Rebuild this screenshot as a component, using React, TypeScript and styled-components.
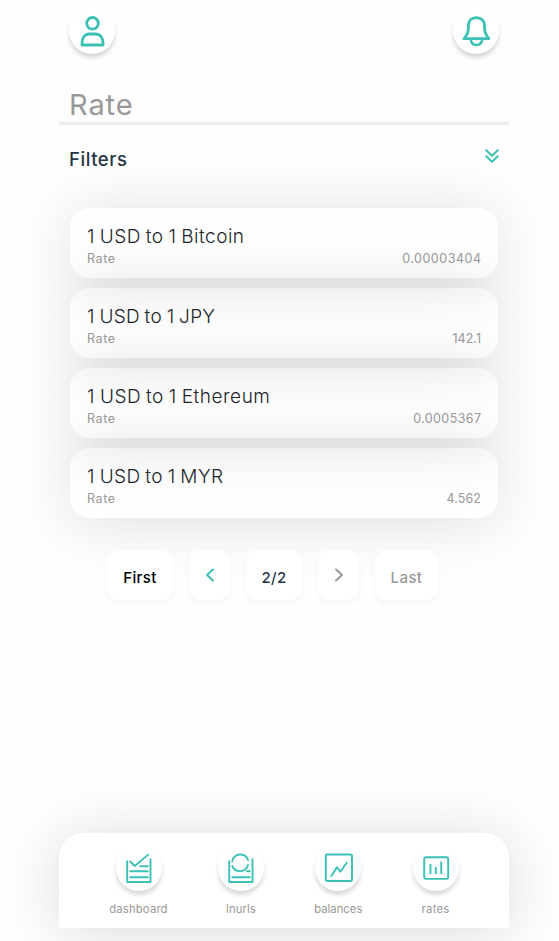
import React from "react";
import styled, { createGlobalStyle } from "styled-components";

const teal = "#3ac1b3";

const GlobalStyle = createGlobalStyle`
  * { box-sizing: border-box; }
  body {
    margin: 0;
    background: #fefefe;
    color: #212529;
    font-family: Inter, "Liberation Sans", sans-serif;
    overflow: hidden;
  }
  button { font: inherit; border: 0; padding: 0; }
`;

const Page = styled.div`
  width: 450px;
  height: 941px;
  margin-left: 59px;
  display: flex;
  flex-direction: column;
`;

const TopBar = styled.header`
  display: flex;
  justify-content: space-between;
  padding: 8px 10px 0;
`;

const RoundButton = styled.span`
  width: 46px;
  height: 46px;
  border-radius: 50%;
  background: #fff;
  box-shadow: 0 4px 4px rgba(0, 0, 0, 0.15);
  display: flex;
  align-items: center;
  justify-content: center;
`;

const Icon = styled.svg`
  display: block;
  fill: none;
  stroke: currentColor;
  color: ${teal};
  stroke-linecap: round;
  stroke-linejoin: round;
`;

const Title = styled.h1`
  height: 71px;
  margin: 0;
  padding: 33px 10px 0;
  border-bottom: 3px solid #ededed;
  border-radius: 2px;
  font-size: 29px;
  line-height: 36px;
  font-weight: 400;
  letter-spacing: 0.9px;
  color: #999;
`;

const FilterBar = styled.div`
  height: 83px;
  padding: 22px 10px 0;
  display: flex;
  justify-content: space-between;
  align-items: flex-start;
`;

const FilterTitle = styled.h2`
  margin: 0;
  font-size: 18.5px;
  line-height: 24px;
  font-weight: 500;
  letter-spacing: 0.55px;
  color: #253746;
`;

const RateList = styled.main`
  padding: 0 11px;
  display: flex;
  flex-direction: column;
  gap: 10px;
`;

const RateCard = styled.section`
  height: 70px;
  padding: 16px 17px 0;
  border-radius: 20px;
  box-shadow: 0 4px 60px rgba(0, 0, 0, 0.13);
`;

const Pair = styled.div<{ $spacing: number }>`
  font-size: 19px;
  line-height: 25px;
  font-weight: 330;
  white-space: nowrap;
  word-spacing: -1px;
  letter-spacing: ${(p) => p.$spacing}px;
`;

const RateLine = styled.div`
  display: flex;
  justify-content: space-between;
  font-size: 12.5px;
  line-height: 19px;
  font-weight: 400;
  letter-spacing: 0.6px;
  color: #999;
`;

const Amount = styled.span<{ $spacing: number }>`
  letter-spacing: ${(p) => p.$spacing}px;
  margin-right: ${(p) => -p.$spacing}px;
`;

const Pager = styled.nav`
  display: flex;
  gap: 16px;
  padding: 32px 0 0 48px;
`;

const PageButton = styled.button<{ $width: number; $color?: string }>`
  width: ${(p) => p.$width}px;
  height: 50px;
  padding-top: 4px;
  display: flex;
  align-items: center;
  justify-content: center;
  border-radius: 12px;
  background: #fff;
  box-shadow: 0 3px 6px rgba(0, 0, 0, 0.04);
  color: ${(p) => p.$color ?? "#253746"};
  font-size: 15px;
  font-weight: 500;
  letter-spacing: 0.4px;
`;

const Arrow = styled(Icon)`
  color: inherit;
  margin-top: -4px;
`;

const BottomNav = styled.footer`
  height: 95px;
  margin: auto 0 13px;
  padding: 12px 0 0 50px;
  flex: none;
  display: flex;
  gap: 50px;
  background: #fff;
  border-radius: 25px 25px 0 0;
  box-shadow: 0 4px 60px rgba(0, 0, 0, 0.14);
`;

const NavItem = styled.div<{ $width: number }>`
  width: ${(p) => p.$width}px;
  display: flex;
  flex-direction: column;
  align-items: center;
`;

const NavLabel = styled.span<{ $spacing: number }>`
  margin-top: 11px;
  font-size: 11.3px;
  line-height: 14px;
  font-weight: 400;
  letter-spacing: ${(p) => p.$spacing}px;
  color: #999;
`;

const UserIcon = () => (
  <Icon width="46" height="46" viewBox="0 0 46 46" strokeWidth="2.8">
    <circle cx="23.5" cy="15.3" r="5.8" />
    <path d="M13 37V35.5C13 29.5 16 26 20.5 26H26.5C31 26 34 29.5 34 35.5V37Z" />
  </Icon>
);

const BellIcon = () => (
  <Icon width="46" height="46" viewBox="0 0 46 46" strokeWidth="2.8">
    <path d="M23.3 9.6C18.3 9.6 15.5 13 15.5 17.3C15.5 24 14.9 26 11 30.6H36C32 26 31.5 24 31.5 17.3C31.5 13 28.3 9.6 23.3 9.6Z" />
    <path strokeWidth="2.4" d="M17.7 31.5C18.7 38.8 28.3 38.8 29.2 31.5" />
  </Icon>
);

const DashboardIcon = () => (
  <Icon width="46" height="46" viewBox="0 0 46 46" strokeWidth="1.9">
    <path d="M11.2 16.3V37H34.5V14.3M14.2 16.5L18.8 21L32.2 9.6M24.2 21.3H31.8M14.3 26.3H31.8M14.3 32.3H31.8" />
  </Icon>
);

const LnurlIcon = () => (
  <Icon width="46" height="46" viewBox="0 0 46 46" strokeWidth="1.9">
    <path d="M11.2 16.3V37H34.5V14.3M14.3 32.3H31.8M29 26.3H31.8M14.2 16.4C16 7.8 27.4 7.2 30 15M14.3 20.9C17 28.2 27.7 27.8 30 20" />
  </Icon>
);

const BalanceIcon = () => (
  <Icon width="46" height="46" viewBox="0 0 46 46" strokeWidth="1.9">
    <rect x="10.8" y="9.5" width="26.2" height="26.5" rx="1.3" />
    <path d="M16.3 31L22 22.2L25.3 26.8L31.8 17.5" />
  </Icon>
);

const RatesIcon = () => (
  <Icon width="46" height="46" viewBox="0 0 46 46" strokeWidth="1.9">
    <rect x="11.2" y="12.3" width="24" height="21.6" rx="1.8" />
    <path d="M17.5 19.8V28.2M22.8 22.8V28.2M28.2 17.3V28.2" />
  </Icon>
);

const rates = [
  { pair: "1 USD to 1 Bitcoin", spacing: 0.5, amount: "0.00003404", amountSpacing: 0.52 },
  { pair: "1 USD to 1 JPY", spacing: 0.3, amount: "142.1", amountSpacing: 0.05 },
  { pair: "1 USD to 1 Ethereum", spacing: 0.54, amount: "0.0005367", amountSpacing: 0.4 },
  { pair: "1 USD to 1 MYR", spacing: 0.42, amount: "4.562", amountSpacing: 0.1 },
];

const navItems = [
  { label: "dashboard", icon: <DashboardIcon />, width: 59, spacing: 0.15 },
  { label: "lnurls", icon: <LnurlIcon />, width: 46, spacing: 0.1 },
  { label: "balances", icon: <BalanceIcon />, width: 48.6, spacing: 0 },
  { label: "rates", icon: <RatesIcon />, width: 46, spacing: 0.25 },
];

export default function App() {
  return (
    <>
      <GlobalStyle />
      <Page>
        <TopBar>
          <RoundButton><UserIcon /></RoundButton>
          <RoundButton><BellIcon /></RoundButton>
        </TopBar>
        <Title>Rate</Title>
        <FilterBar>
          <FilterTitle>Filters</FilterTitle>
          <Icon width="14" height="18" viewBox="0 0 14 18" strokeWidth="2">
            <path d="M1.2 3.3L7 8.8L12.8 3.3M1.2 9.3L7 14.8L12.8 9.3" />
          </Icon>
        </FilterBar>
        <RateList>
          {rates.map((rate) => (
            <RateCard key={rate.pair}>
              <Pair $spacing={rate.spacing}>{rate.pair}</Pair>
              <RateLine>
                <span>Rate</span>
                <Amount $spacing={rate.amountSpacing}>{rate.amount}</Amount>
              </RateLine>
            </RateCard>
          ))}
        </RateList>
        <Pager>
          <PageButton $width={66} $color="#000">First</PageButton>
          <PageButton $width={41} $color={teal}>
            <Arrow width="10" height="14" viewBox="0 0 10 14" strokeWidth="2"><path d="M8 1.5L2 7L8 12.5" /></Arrow>
          </PageButton>
          <PageButton $width={56}>2/2</PageButton>
          <PageButton $width={41} $color="#999">
            <Arrow width="10" height="14" viewBox="0 0 10 14" strokeWidth="2"><path d="M2 1.5L8 7L2 12.5" /></Arrow>
          </PageButton>
          <PageButton $width={63} $color="#999">Last</PageButton>
        </Pager>
        <BottomNav>
          {navItems.map((item) => (
            <NavItem key={item.label} $width={item.width}>
              <RoundButton>{item.icon}</RoundButton>
              <NavLabel $spacing={item.spacing}>{item.label}</NavLabel>
            </NavItem>
          ))}
        </BottomNav>
      </Page>
    </>
  );
}
